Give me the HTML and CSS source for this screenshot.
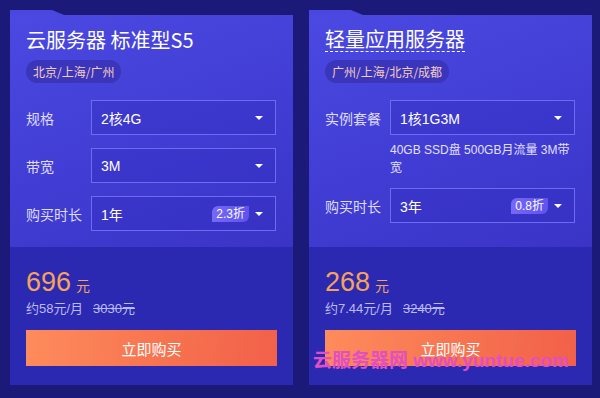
FILE: index.html
```html
<!DOCTYPE html>
<html lang="zh-CN">
<head>
    <meta charset="UTF-8">
    <meta name="viewport" content="width=device-width, initial-scale=1.0">
    <title>云服务器</title>
    <link rel="stylesheet" href="styles.css">
</head>
<body>
    <div class="container">

        <!-- CVM S5 -->
        <div class="card">
            <div class="card-top">
                <h2 class="card-title">云服务器 标准型S5</h2>
                <span class="region">北京/上海/广州</span>

                <div class="rows">
                    <div class="row">
                        <span class="row-label">规格</span>
                        <div class="select"><span class="select-value">2核4G</span><span class="arrow"></span></div>
                    </div>
                    <div class="row">
                        <span class="row-label">带宽</span>
                        <div class="select"><span class="select-value">3M</span><span class="arrow"></span></div>
                    </div>
                    <div class="row">
                        <span class="row-label">购买时长</span>
                        <div class="select"><span class="select-value">1年</span><span class="discount">2.3折</span><span class="arrow"></span></div>
                    </div>
                </div>
            </div>
            <div class="card-bottom">
                <div class="price"><span class="price-num">696</span><span class="price-unit">元</span></div>
                <div class="price-sub">约58元/月<del class="price-old">3030元</del></div>
                <button class="buy-button">立即购买</button>
            </div>
        </div>

        <!-- Lighthouse -->
        <div class="card">
            <div class="card-top">
                <h2 class="card-title card-title-dashed">轻量应用服务器</h2>
                <span class="region">广州/上海/北京/成都</span>

                <div class="rows">
                    <div class="row">
                        <span class="row-label">实例套餐</span>
                        <div class="select"><span class="select-value">1核1G3M</span><span class="arrow"></span></div>
                    </div>
                    <p class="row-desc">40GB SSD盘 500GB月流量 3M带宽</p>
                    <div class="row">
                        <span class="row-label">购买时长</span>
                        <div class="select"><span class="select-value">3年</span><span class="discount">0.8折</span><span class="arrow"></span></div>
                    </div>
                </div>
            </div>
            <div class="card-bottom">
                <div class="price"><span class="price-num">268</span><span class="price-unit">元</span></div>
                <div class="price-sub">约7.44元/月<del class="price-old">3240元</del></div>
                <button class="buy-button">立即购买</button>
            </div>
        </div>

    </div>

    <div class="watermark">云服务器网 www.yuntue.com</div>
</body>
</html>
```

FILE: styles.css
```css
/* Server price cards */

body {
    margin: 0;
    background-color: #1c1a79;
    font-family: "Liberation Sans", "Noto Sans CJK SC", sans-serif;
    color: #ffffff;
    width: 600px;
    height: 398px;
    overflow: hidden;
    position: relative;
}

.container {
    display: flex;
    gap: 16px;
    padding: 15px 8px 13px 10px;
}

.card {
    position: relative;
    width: 283px;
    display: flex;
    flex-direction: column;
}

/* little folder tab above the card */
.card::before {
    content: "";
    position: absolute;
    left: 0;
    top: -5px;
    width: 54px;
    height: 5px;
    background-color: #4a47e0;
    clip-path: polygon(0 0, 42px 0, 54px 100%, 0 100%);
}

.card-top {
    height: 232px;
    box-sizing: border-box;
    padding: 13px 17px 0 16px;
    background: linear-gradient(160deg, #4b49e2 0%, #413dd4 55%, #3a34c6 100%);
}

.card-title {
    margin: 0;
    font-family: "Noto Sans CJK SC", sans-serif;
    font-size: 20px;
    font-weight: 400;
    line-height: 24px;
    color: #ffffff;
    display: inline-block;
}

.card-title-dashed {
    border-bottom: 1px dashed #ffffff;
    line-height: 22px;
    padding-bottom: 1px;
}

.region {
    display: block;
    width: fit-content;
    margin-top: 8px;
    height: 23px;
    line-height: 23px;
    padding: 0 7px;
    border-radius: 12px;
    background-color: #3a35bb;
    color: #f5cdbf;
    font-family: "Noto Sans CJK SC", sans-serif;
    font-size: 12px;
}

.rows {
    margin-top: 17px;
    display: flex;
    flex-direction: column;
    gap: 13px;
}

.row {
    display: flex;
    align-items: center;
}

.row-label {
    width: 65px;
    flex-shrink: 0;
    font-family: "Noto Sans CJK SC", sans-serif;
    font-size: 14px;
    color: #dedcfa;
}

.select {
    flex: 1;
    height: 35px;
    box-sizing: border-box;
    border: 1px solid #6d6bf2;
    display: flex;
    align-items: center;
    padding: 0 12px 0 9px;
    background-color: rgba(50, 44, 190, 0.35);
}

.select-value {
    flex: 1;
    font-size: 14px;
    color: #ffffff;
}

.arrow {
    width: 0;
    height: 0;
    border-left: 4px solid transparent;
    border-right: 4px solid transparent;
    border-top: 4px solid #ffffff;
    margin-left: 6px;
}

.discount {
    height: 16px;
    line-height: 16px;
    padding: 0 4px;
    border-radius: 6px 0 6px 0;
    background: linear-gradient(90deg, #7668f7, #5f52ee);
    font-size: 12px;
    color: #ffffff;
}

.row-desc {
    margin: -7px 0 -2px 65px;
    font-size: 12px;
    line-height: 18px;
    color: #e2e0ff;
}

.card-bottom {
    flex: 1;
    background-color: #2b29b1;
    padding: 19px 16px 19px;
}

.price {
    height: 32px;
    display: flex;
    align-items: baseline;
    color: #f6a25b;
}

.price-num {
    font-size: 27px;
    line-height: 32px;
}

.price-unit {
    margin-left: 5px;
    font-family: "Noto Sans CJK SC", sans-serif;
    font-size: 14px;
}

.price-sub {
    margin-top: 2px;
    height: 18px;
    line-height: 18px;
    font-size: 13px;
    color: #bcbaf2;
}

.price-old {
    margin-left: 10px;
}

.buy-button {
    display: block;
    width: 251px;
    height: 36px;
    margin-top: 12px;
    border: none;
    background: linear-gradient(100deg, #fe8c5c 0%, #f6714f 60%, #f2604a 100%);
    color: #ffffff;
    font-family: "Noto Sans CJK SC", sans-serif;
    font-size: 15px;
    cursor: pointer;
}

/* site watermark printed over the screenshot */
.watermark {
    position: absolute;
    left: 313px;
    top: 350px;
    font-family: "Liberation Sans", "Noto Sans CJK SC", sans-serif;
    font-size: 19px;
    line-height: 22px;
    font-weight: bold;
    color: #e24ec4;
    white-space: nowrap;
}
```
